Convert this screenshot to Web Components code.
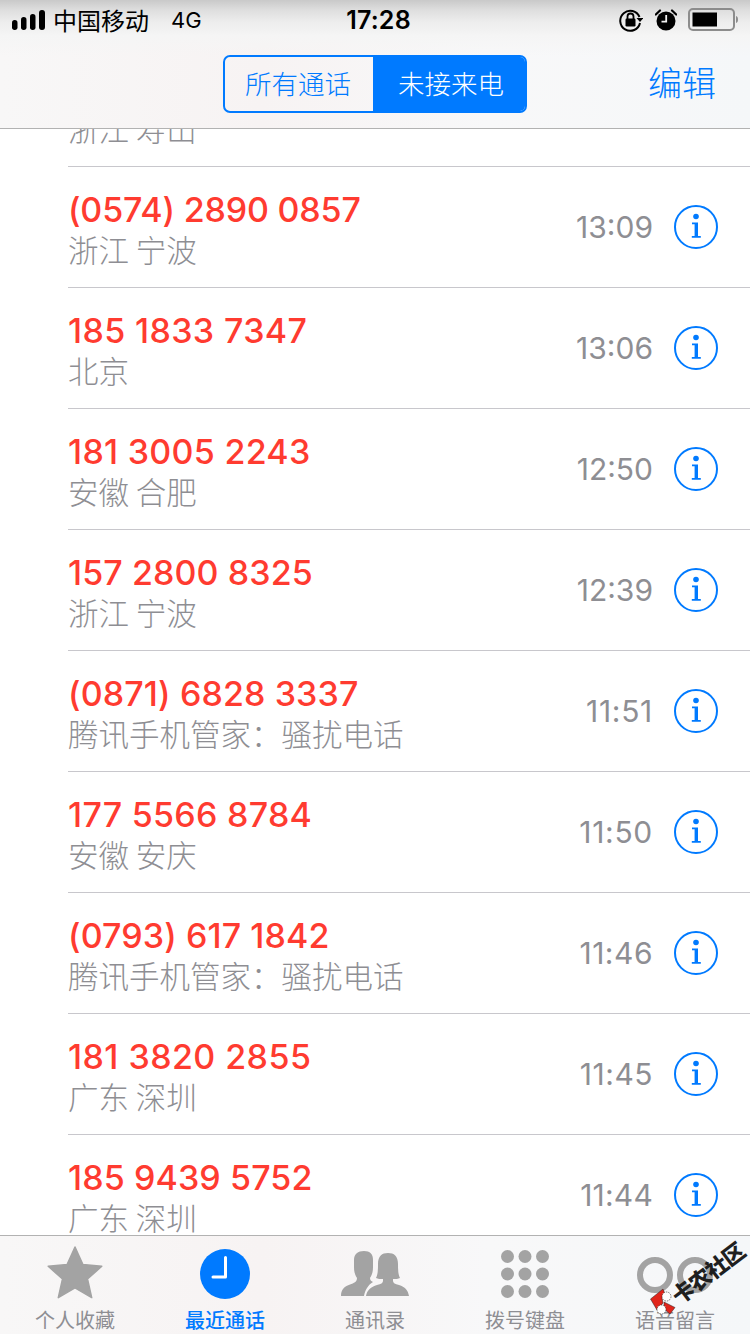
<!DOCTYPE html>
<html lang="zh"><head><meta charset="utf-8">
<style>
html,body{margin:0;padding:0;background:#fff}
body{width:750px;height:1334px;overflow:hidden;font-family:Inter,"Noto Sans CJK SC",sans-serif}
</style></head><body>
<phone-app>
  <nav-header slot="header"></nav-header>
  <call-row number="" place="浙江 寿山" time="" info="0" slot="list"></call-row>
  <call-row slot="list" number="(0574) 2890 0857" place="浙江 宁波" time="13:09" ls="-.17"></call-row>
  <call-row slot="list" number="185 1833 7347" place="北京" time="13:06" ls=".35"></call-row>
  <call-row slot="list" number="181 3005 2243" place="安徽 合肥" time="12:50" ls=".27"></call-row>
  <call-row slot="list" number="157 2800 8325" place="浙江 宁波" time="12:39"></call-row>
  <call-row slot="list" number="(0871) 6828 3337" place="腾讯手机管家：骚扰电话" time="11:51" tls=".7"></call-row>
  <call-row slot="list" number="177 5566 8784" place="安徽 安庆" time="11:50" ls=".27" tls=".7"></call-row>
  <call-row slot="list" number="(0793) 617 1842" place="腾讯手机管家：骚扰电话" time="11:46" tls=".5"></call-row>
  <call-row slot="list" number="181 3820 2855" place="广东 深圳" time="11:45" ls=".43" tls=".5"></call-row>
  <call-row slot="list" number="185 9439 5752" place="广东 深圳" time="11:44" tls=".2"></call-row>
  <tab-bar slot="tabs"></tab-bar>
</phone-app>
<script>
class PhoneApp extends HTMLElement{constructor(){super();this.attachShadow({mode:'open'}).innerHTML=`
<style>:host{display:flex;flex-direction:column;width:750px;height:1334px;overflow:hidden;position:relative}
.list{flex:1;min-height:0;overflow:hidden}
.scroll{margin-top:-83px;display:block}
</style>
<slot name="header"></slot>
<div class="list"><div class="scroll"><slot name="list"></slot></div></div>
<slot name="tabs"></slot>`}}
customElements.define('phone-app',PhoneApp);

class NavHeader extends HTMLElement{constructor(){super();this.attachShadow({mode:'open'}).innerHTML=`
<style>:host{display:block;height:128px;border-bottom:1px solid #b2b2b2;position:relative;z-index:2;
background:linear-gradient(180deg,#c9c9c9 0,#dedede 10px,#ededed 22px,#f5f5f5 36px,rgba(247,247,247,0) 56px),linear-gradient(90deg,#f8f7f7,#f7f3f3 35%,#f8f8f9 65%,#f5f7f9)}
.status{height:40px;display:grid;grid-template-columns:1fr auto 1fr;align-items:center;padding:0 12px;color:#000}
.left{display:flex;align-items:center;font-size:24px;gap:8px;font-family:"Noto Sans CJK SC",sans-serif;font-weight:400}
.left span:first-of-type{position:relative;top:-1px}
.net{font-family:Inter,sans-serif;font-size:22px;margin-left:14px;font-weight:400}
.clock{font-size:25px;font-weight:600;font-family:Inter,sans-serif;letter-spacing:.2px;margin-left:7px}
.right{display:flex;align-items:center;justify-content:flex-end;gap:11px}
.right svg:first-child{margin-right:1px}
.nav{height:88px;display:flex;align-items:flex-start;justify-content:center;position:relative}
.seg{display:flex;margin-top:15px;width:304px;height:58px;box-sizing:border-box;border:2px solid #007aff;border-radius:7px;overflow:hidden;font-family:"Noto Sans CJK SC",sans-serif;font-size:26.5px;font-weight:300}
.seg span{display:flex;align-items:center;justify-content:center;color:#007aff;padding-bottom:4px;box-sizing:border-box}
.seg span:first-child{width:148px;padding-right:2px}
.seg span+span{flex:1;background:#007aff;color:#fff;padding-left:4px}
.edit{position:absolute;right:34px;top:19px;color:#007aff;font-family:"Noto Sans CJK SC",sans-serif;font-size:34px;line-height:46px;font-weight:300}
</style>
<div class="status">
 <div class="left">
  <svg width="33" height="20" viewBox="0 0 33 20"><rect x="0" y="10" width="5.500" height="10" rx="2.700"/><rect x="9" y="7" width="5.500" height="13" rx="2.700"/><rect x="18" y="4" width="5.500" height="16" rx="2.700"/><rect x="27" y="0" width="6" height="20" rx="2.900"/></svg>
  <span>中国移动</span><span class="net">4G</span>
 </div>
 <span class="clock">17:28</span>
 <div class="right">
  <svg width="24" height="24" viewBox="0 0 24 24"><path d="M20.500 9A10 10 0 1 0 21 15" fill="none" stroke="#000" stroke-width="2"/><path d="M17.500 10h7l-3.500 4z"/><rect x="6.500" y="10.500" width="10" height="8" rx="1.200"/><path d="M8.500 11V8.500a3 3 0 0 1 6 0V11" fill="none" stroke="#000" stroke-width="1.800"/></svg>
  <svg width="22" height="22" viewBox="0 0 22 22"><circle cx="11" cy="12" r="9.500"/><path d="M11.200 6v6.600H6.500" fill="none" stroke="#f1f1f1" stroke-width="1.800"/><path d="M.8 5.500 5 1.500M21.200 5.500 17 1.500" stroke="#000" stroke-width="2.200" stroke-linecap="round"/></svg>
  <svg width="50" height="24" viewBox="0 0 50 24"><rect x="1" y="1" width="45" height="21" rx="4" fill="none" stroke="#8c8c8c" stroke-width="2"/><rect x="4.500" y="4.500" width="24.500" height="14"/><path d="M48 8c1.500.3 2 1.800 2 3.500s-.5 3.200-2 3.500z" fill="#8c8c8c"/></svg>
 </div>
</div>
<div class="nav"><div class="seg"><span>所有通话</span><span>未接来电</span></div><span class="edit">编辑</span></div>`}}
customElements.define('nav-header',NavHeader);

class InfoIcon extends HTMLElement{constructor(){super();this.attachShadow({mode:'open'}).innerHTML=`
<style>:host{display:block;width:44px;height:44px}svg{display:block}</style>
<svg width="44" height="44" viewBox="0 0 44 44"><circle cx="22" cy="22" r="21" fill="none" stroke="#007aff" stroke-width="2"/><circle cx="22" cy="11.500" r="2.800" fill="#007aff"/><path d="M18 17.500h6V31h2.800v1.800H17.800V31h2.800V19.300H18z" fill="#007aff"/></svg>`}}
customElements.define('info-icon',InfoIcon);

class CallRow extends HTMLElement{constructor(){super();this.attachShadow({mode:'open'})}
connectedCallback(){const g=n=>this.getAttribute(n)||'';const info=g('info')!=='0';
this.shadowRoot.innerHTML=`
<style>:host{display:block;height:121px;box-sizing:border-box;margin-left:68px;border-bottom:1px solid #c8c7cc;position:relative}
.row{height:120px;display:flex;align-items:center;padding-right:32px}
.text{flex:1;min-width:0;display:flex;flex-direction:column}
.num{height:42px;line-height:45px;font-size:34px;font-weight:500;color:#ff3b30;font-family:Inter,sans-serif;letter-spacing:${g('ls')||'.1'}px;margin-top:2px}
.place{height:40px;line-height:40px;font-size:30.5px;font-weight:300;color:#8e8e93;font-family:"Noto Sans CJK SC",sans-serif}
.time{font-size:30px;color:#8e8e93;font-family:Inter,sans-serif;margin-right:21px;letter-spacing:${g('tls')||'0'}px}
</style>
<div class="row"><div class="text"><div class="num">${g('number')||'&nbsp;'}</div><div class="place">${g('place')}</div></div>
${g('time')?`<span class="time">${g('time')}</span>`:''}${info?'<info-icon></info-icon>':''}</div>`}}
customElements.define('call-row',CallRow);

class TabItem extends HTMLElement{constructor(){super();this.attachShadow({mode:'open'}).innerHTML=`
<style>:host{display:flex;flex-direction:column;align-items:center;flex:1;height:98px;color:#8e8e93;font-family:"Noto Sans CJK SC",sans-serif;font-size:20px;font-weight:400}
:host([active]){color:#007aff;font-weight:500}
.ic{height:62px;display:flex;align-items:flex-start;justify-content:center;width:100%}
.lb{line-height:24px;height:24px;margin-top:10px}
::slotted(svg){display:block}
</style><div class="ic"><slot name="icon"></slot></div><div class="lb"><slot></slot></div>`}}
customElements.define('tab-item',TabItem);

class WaterMark extends HTMLElement{constructor(){super();this.attachShadow({mode:'open'}).innerHTML=`
<style>:host{display:block;position:absolute;left:646px;top:4px;width:104px;height:80px;pointer-events:none}
svg{position:absolute;left:4px;top:48px}
.t{position:absolute;left:61px;top:32px;transform:translate(-50%,-50%) rotate(-37deg);font:900 22px/26px "Noto Sans CJK SC",sans-serif;color:#1f1f1f;white-space:nowrap;letter-spacing:-1px}
</style>
<svg width="26" height="27" viewBox="0 0 26 27"><path d="M.5 11 13 1l2 5-3 4 1 5-6 7z" fill="#e1251b" stroke="#222" stroke-width=".5"/><path d="M14 14l11 5.500-5 6.500-6-5z" fill="#e1251b" stroke="#222" stroke-width=".5"/><circle cx="16.500" cy="8.500" r="4.500" fill="#fff" stroke="#222" stroke-width=".6" stroke-dasharray="1.500 1"/><circle cx="11.500" cy="21.500" r="4.500" fill="#fff" stroke="#222" stroke-width=".6" stroke-dasharray="1.500 1"/></svg>
<span class="t">卡农社区</span>`}}
customElements.define('water-mark',WaterMark);

class TabBar extends HTMLElement{constructor(){super();this.attachShadow({mode:'open'}).innerHTML=`
<style>:host{display:flex;height:98px;border-top:1px solid #b2b2b2;position:relative;z-index:2;padding:0;
background:linear-gradient(90deg,#f8f7f7,#f7f3f3 35%,#f8f8f9 65%,#f5f7f9)}
</style>
<tab-item>个人收藏<svg slot="icon" width="56" height="56" viewBox="0 0 56 56" style="margin-top:8px"><path d="M28 3l7.800 17.400 19 1.900-14.300 12.600 4.200 18.700L28 43.900 11.300 53.600l4.200-18.700L1.200 22.300l19-1.900z" fill="#a3a3a3" stroke="#a3a3a3" stroke-width="1.500" stroke-linejoin="round"/></svg></tab-item>
<tab-item active>最近通话<svg slot="icon" width="50" height="50" viewBox="0 0 50 50" style="margin-top:13px"><circle cx="25" cy="25" r="25" fill="#007aff"/><path d="M25.500 8.500V28H13" fill="none" stroke="#fff" stroke-width="3" stroke-linecap="round" stroke-linejoin="round"/></svg></tab-item>
<tab-item>通讯录<svg slot="icon" width="70" height="46" viewBox="0 0 70 46" style="margin-top:14px"><path d="M1 46C1 39 5 36 10 34.500 14 33 17 32 17 28 15 25 14 22 14 17V10C14 4 18 1 24 1S33 4 33 10V17C33 22 32 25 30 28 30 30 31 31 33 32 28 35 25 40 24 46Z" fill="#a3a3a3"/><path d="M26 46C27 40 31 37 37 35 41 34 43 33 43 31V29C40 29 38 29 36 28 38 24 38 19 38 14 38 6 42 3 48 3S58 6 58 14C58 19 58 24 60 28 58 29 56 29 53 29V31C53 33 55 34 59 35 65 37 68 40 69 46Z" fill="#a3a3a3"/></svg></tab-item>
<tab-item>拨号键盘<svg slot="icon" width="48" height="48" viewBox="0 0 48 48" style="margin-top:14px"><g fill="#a3a3a3"><circle cx="6.500" cy="6.500" r="6.500"/><circle cx="24" cy="6.500" r="6.500"/><circle cx="41.500" cy="6.500" r="6.500"/><circle cx="6.500" cy="24" r="6.500"/><circle cx="24" cy="24" r="6.500"/><circle cx="41.500" cy="24" r="6.500"/><circle cx="6.500" cy="41.500" r="6.500"/><circle cx="24" cy="41.500" r="6.500"/><circle cx="41.500" cy="41.500" r="6.500"/></g></svg></tab-item>
<tab-item>语音留言<svg slot="icon" width="76" height="36" viewBox="0 0 76 36" style="margin-top:21px"><g fill="none" stroke="#a3a3a3" stroke-width="6"><circle cx="18" cy="18" r="15"/><circle cx="58" cy="18" r="15"/></g></svg></tab-item>
<water-mark></water-mark>`}}
customElements.define('tab-bar',TabBar);
</script>
</body></html>
